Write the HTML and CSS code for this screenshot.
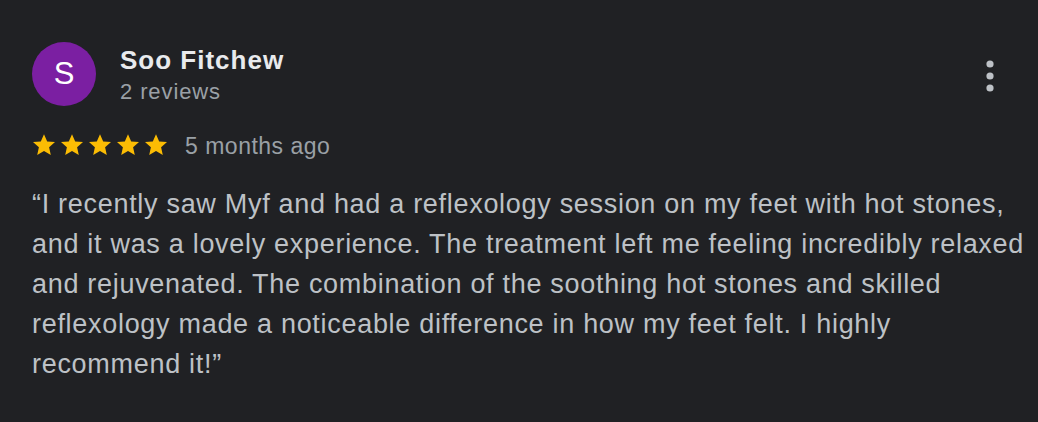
FILE: index.html
```html
<!DOCTYPE html>
<html lang="en">
<head>
<meta charset="utf-8">
<title>Review</title>
<link rel="stylesheet" href="styles.css">
</head>
<body>
<div class="review">
  <div class="header">
    <div class="avatar">S</div>
    <div class="who">
      <div class="name">Soo Fitchew</div>
      <div class="count">2 reviews</div>
    </div>
    <button class="more" aria-label="More options">
      <svg width="8" height="32" viewBox="0 0 8 32"><circle cx="4" cy="4" r="3.6"/><circle cx="4" cy="16" r="3.6"/><circle cx="4" cy="28" r="3.6"/></svg>
    </button>
  </div>
  <div class="meta">
    <div class="stars">
      <svg class="star" viewBox="0 0 24 24"><path d="M12 1.2l3.2 7.2 7.8.7-5.9 5.2 1.7 7.7L12 18l-6.8 4 1.7-7.7L1 9.1l7.8-.7z"/></svg>
      <svg class="star" viewBox="0 0 24 24"><path d="M12 1.2l3.2 7.2 7.8.7-5.9 5.2 1.7 7.7L12 18l-6.8 4 1.7-7.7L1 9.1l7.8-.7z"/></svg>
      <svg class="star" viewBox="0 0 24 24"><path d="M12 1.2l3.2 7.2 7.8.7-5.9 5.2 1.7 7.7L12 18l-6.8 4 1.7-7.7L1 9.1l7.8-.7z"/></svg>
      <svg class="star" viewBox="0 0 24 24"><path d="M12 1.2l3.2 7.2 7.8.7-5.9 5.2 1.7 7.7L12 18l-6.8 4 1.7-7.7L1 9.1l7.8-.7z"/></svg>
      <svg class="star" viewBox="0 0 24 24"><path d="M12 1.2l3.2 7.2 7.8.7-5.9 5.2 1.7 7.7L12 18l-6.8 4 1.7-7.7L1 9.1l7.8-.7z"/></svg>
    </div>
    <span class="when">5 months ago</span>
  </div>
  <p class="text">“I recently saw Myf and had a reflexology session on my feet with hot stones, and it was a lovely experience. The treatment left me feeling incredibly relaxed and rejuvenated. The combination of the soothing hot stones and skilled reflexology made a noticeable difference in how my feet felt. I highly recommend it!”</p>
</div>
</body>
</html>
```

FILE: styles.css
```css
html, body {
  margin: 0;
  padding: 0;
  background: #202124;
  height: 100%;
}
body {
  font-family: "Liberation Sans", Arial, sans-serif;
}
.review {
  padding: 42px 0 0 32px;
}
.header {
  display: flex;
  align-items: flex-start;
}
.avatar {
  width: 64px;
  height: 64px;
  border-radius: 50%;
  background: #7b1fa2;
  color: #fff;
  font-size: 31px;
  display: flex;
  align-items: center;
  justify-content: center;
  flex-shrink: 0;
}
.who {
  margin-left: 24px;
  flex: 1;
  padding-top: 3px;
}
.name {
  font-size: 26px;
  font-weight: bold;
  color: #e8eaed;
  line-height: 30px;
  letter-spacing: 1px;
}
.count {
  margin-top: 2px;
  font-size: 22px;
  color: #9aa0a6;
  line-height: 30px;
  letter-spacing: 0.9px;
}
.more {
  background: none;
  border: 0;
  padding: 0;
  margin: 18px 44px 0 0;
  fill: #bdc1c6;
  display: flex;
}
.meta {
  display: flex;
  align-items: center;
  margin-top: 25px;
}
.stars {
  display: flex;
  gap: 4px;
}
.star {
  width: 24px;
  height: 24px;
  fill: #fbbc04;
}
.when {
  margin-left: 17px;
  font-size: 23px;
  line-height: 24px;
  padding-top: 2px;
  color: #9aa0a6;
  letter-spacing: 0.5px;
}
.text {
  margin: 26px 0 0 0;
  font-size: 27px;
  line-height: 40px;
  color: #bdc1c6;
  letter-spacing: 0.7px;
  width: 1000px;
}
```
